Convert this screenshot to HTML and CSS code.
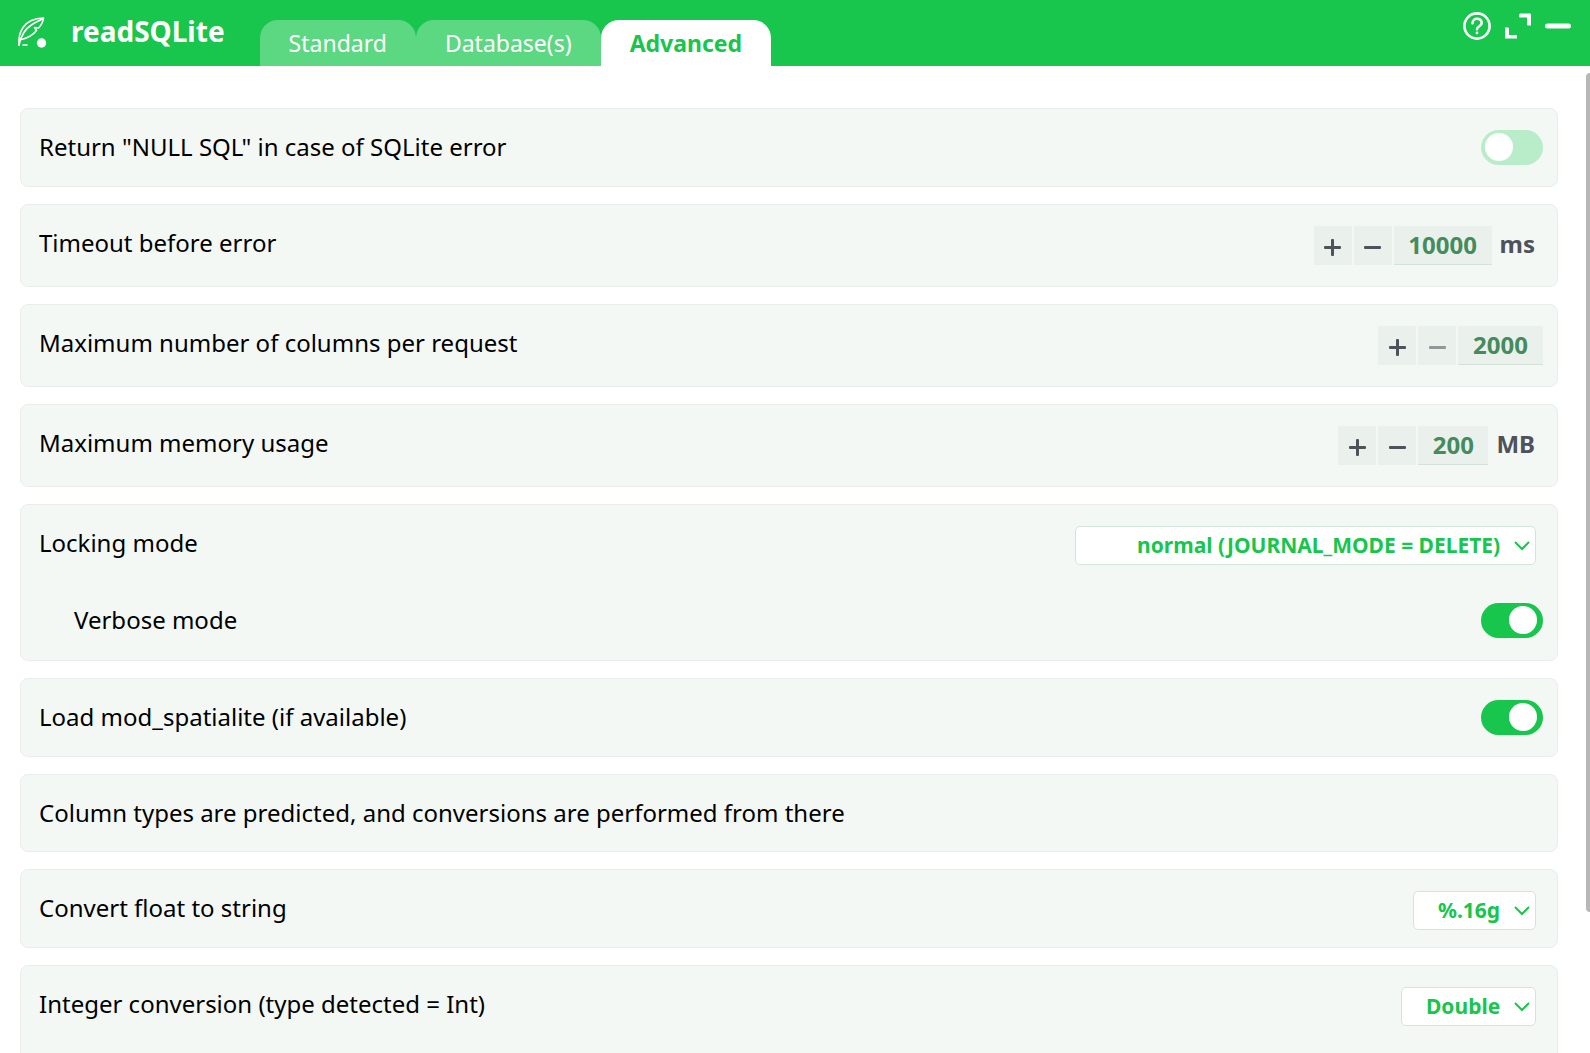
FILE: index.html
```html
<!DOCTYPE html>
<html lang="en">
<head>
    <meta charset="UTF-8">
    <meta name="viewport" content="width=device-width, initial-scale=1.0">
    <title>readSQLite</title>
    <link rel="stylesheet" href="styles.css">
</head>
<body>
    <header class="topbar">
        <svg class="logo" width="32" height="34" viewBox="0 0 32 34" fill="none" stroke="#fff" stroke-width="1.6" stroke-linecap="round" stroke-linejoin="round">
            <path d="M3 30 C2 18 7 3.500 27.500 3 C27 7 25.500 10 22.500 13 L18.500 12.500 L20.500 15.500 C17 20 12 23 5.500 24.500"/>
            <path d="M3 30 C4.500 22 9 14 16 9.500 C20 7 24 5.500 27 3.500"/>
            <path d="M7 30 H11"/>
            <circle cx="25.500" cy="28" r="4.700" fill="#fff" stroke="none"/>
        </svg>
        <h1 class="title">readSQLite</h1>
        <nav class="tabs">
            <button type="button" class="tab">Standard</button>
            <button type="button" class="tab">Database(s)</button>
            <button type="button" class="tab active">Advanced</button>
        </nav>
        <div class="window-actions">
            <button type="button" class="icon-button" aria-label="Help">
                <svg width="28" height="28" viewBox="0 0 28 28" fill="none" stroke="#fff" stroke-width="2.6" stroke-linecap="round">
                    <circle cx="14" cy="14" r="12.600"/>
                    <path d="M9.500 11.300 C9.500 5.200 18.700 5.400 18.700 11 C18.700 14.500 14 14 14 17.300"/>
                    <circle cx="14" cy="21" r="1.400" fill="#fff" stroke="none"/>
                </svg>
            </button>
            <button type="button" class="icon-button" aria-label="Expand">
                <svg width="26" height="26" viewBox="0 0 26 26" fill="#fff">
                    <path d="M15.500 .5 H25 a1 1 0 0 1 1 1 V12.500 H23 a1 1 0 0 1 -1 -1 V4.500 H15 a1 1 0 0 1 -1 -1 V2 a1.500 1.500 0 0 1 1.500 -1.500 Z"/>
                    <path d="M0 14.500 H3 a1 1 0 0 1 1 1 V22 H11 a1 1 0 0 1 1 1 V25.500 H0 Z"/>
                </svg>
            </button>
            <button type="button" class="icon-button" aria-label="Minimize">
                <svg width="26" height="26" viewBox="0 0 26 26" fill="none" stroke="#fff" stroke-width="5" stroke-linecap="round">
                    <path d="M2.500 13 H23.500"/>
                </svg>
            </button>
        </div>
    </header>

    <main class="content">
        <section class="card">
            <div class="row">
                <label for="nullSql">Return "NULL SQL" in case of SQLite error</label>
                <input type="checkbox" class="switch" id="nullSql">
            </div>
        </section>

        <section class="card">
            <div class="row tall">
                <label for="timeout">Timeout before error</label>
                <div class="stepper">
                    <button type="button" class="step plus" aria-label="Increase"></button>
                    <button type="button" class="step" aria-label="Decrease"></button>
                    <input type="text" class="number digits-5" id="timeout" value="10000">
                    <span class="unit">ms</span>
                </div>
            </div>
        </section>

        <section class="card">
            <div class="row tall">
                <label for="columns">Maximum number of columns per request</label>
                <div class="stepper">
                    <button type="button" class="step plus" aria-label="Increase"></button>
                    <button type="button" class="step" aria-label="Decrease" disabled></button>
                    <input type="text" class="number digits-4" id="columns" value="2000">
                </div>
            </div>
        </section>

        <section class="card">
            <div class="row tall">
                <label for="memory">Maximum memory usage</label>
                <div class="stepper">
                    <button type="button" class="step plus" aria-label="Increase"></button>
                    <button type="button" class="step" aria-label="Decrease"></button>
                    <input type="text" class="number digits-3" id="memory" value="200">
                    <span class="unit">MB</span>
                </div>
            </div>
        </section>

        <section class="card">
            <div class="row">
                <label for="locking">Locking mode</label>
                <div class="dropdown">
                    <select id="locking" class="wide">
                        <option>normal (JOURNAL_MODE = DELETE)</option>
                    </select>
                    <svg class="chevron" width="16" height="10" viewBox="0 0 16 10"><path d="M1 1 L8 8 L15 1"/></svg>
                </div>
            </div>
            <div class="row sub">
                <label for="verbose">Verbose mode</label>
                <input type="checkbox" class="switch" id="verbose" checked>
            </div>
        </section>

        <section class="card">
            <div class="row">
                <label for="spatialite">Load mod_spatialite (if available)</label>
                <input type="checkbox" class="switch" id="spatialite" checked>
            </div>
        </section>

        <section class="card">
            <div class="row info">
                <p>Column types are predicted, and conversions are performed from there</p>
            </div>
        </section>

        <section class="card">
            <div class="row">
                <label for="floatFormat">Convert float to string</label>
                <div class="dropdown">
                    <select id="floatFormat">
                        <option>%.16g</option>
                    </select>
                    <svg class="chevron" width="16" height="10" viewBox="0 0 16 10"><path d="M1 1 L8 8 L15 1"/></svg>
                </div>
            </div>
        </section>

        <section class="card">
            <div class="row">
                <label for="intType">Integer conversion (type detected = Int)</label>
                <div class="dropdown">
                    <select id="intType">
                        <option>Double</option>
                    </select>
                    <svg class="chevron" width="16" height="10" viewBox="0 0 16 10"><path d="M1 1 L8 8 L15 1"/></svg>
                </div>
            </div>
            <div class="row sub"></div>
        </section>
        <div class="scroll-thumb"></div>
    </main>
</body>
</html>
```

FILE: styles.css
```css
* {
    box-sizing: border-box;
}
body {
    margin: 0;
    height: 100vh;
    display: flex;
    flex-direction: column;
    overflow: hidden;
    font-family: "Noto Sans", sans-serif;
    font-size: 24px;
    color: #000;
    background: #fff;
}
button, input, select {
    font-family: inherit;
    margin: 0;
    border: none;
}

/* header */
.topbar {
    display: flex;
    align-items: flex-start;
    flex: none;
    height: 66px;
    padding-left: 16px;
    background: #18c54d;
    color: #fff;
}
.logo {
    margin-top: 15px;
}
.title {
    margin: 12px 35px 0 23px;
    font-size: 28px;
    line-height: 38px;
    font-weight: bold;
}
.tabs {
    display: flex;
    align-self: flex-end;
}
.tab {
    height: 46px;
    padding: 0 29px;
    font-size: 23px;
    line-height: 46px;
    color: #fff;
    background: #5dd882;
    border-radius: 18px 18px 0 0;
}
.tab.active {
    color: #18c54d;
    background: #fff;
    font-weight: bold;
}
.window-actions {
    display: flex;
    align-items: center;
    gap: 14px;
    margin: 12px 19px 0 auto;
}
.icon-button {
    display: flex;
    padding: 0;
    background: none;
}

/* settings */
.content {
    position: relative;
    flex: 1;
    display: flex;
    flex-direction: column;
    gap: 17px;
    min-height: 0;
    padding: 42px 32px 0 20px;
    overflow: hidden;
}
.card {
    flex: none;
    padding: 0 14px 0 18px;
    background: #f3f8f5;
    border: 1px solid #ebedec;
    border-radius: 8px;
}
.row {
    display: flex;
    justify-content: space-between;
    align-items: flex-start;
    height: 77px;
    padding-top: 21px;
}
.row.tall {
    height: 81px;
}
.row.info {
    height: 76px;
}
.row.sub {
    height: 78px;
    padding-left: 35px;
}
.row label,
.row p {
    margin: 0;
    line-height: 34px;
}

/* toggle */
.switch {
    appearance: none;
    width: 62px;
    height: 35px;
    padding: 3px 4px;
    border-radius: 18px;
    background: #b9edc9;
}
.switch::before {
    content: "";
    display: block;
    width: 28px;
    height: 28px;
    border-radius: 50%;
    background: #fff;
}
.switch:checked {
    padding-left: 28px;
    background: #18c54d;
}

/* number stepper */
.stepper {
    display: flex;
    gap: 2px;
}
.step {
    display: grid;
    place-items: center;
    width: 38px;
    height: 39px;
    padding: 4px 0 0;
    background: #eaf1ed;
    color: #4e525a;
}
.step::before,
.step.plus::after {
    content: "";
    grid-area: 1 / 1;
    width: 17px;
    height: 3px;
    border-radius: 1px;
    background: currentColor;
}
.step.plus::after {
    width: 3px;
    height: 17px;
}
.step:disabled {
    color: #92979a;
}
.number {
    height: 39px;
    padding: 0 0 2px;
    font-size: 24px;
    font-weight: bold;
    text-align: center;
    color: #458b5b;
    background: #eaf1ed;
    border-bottom: 1px solid #d5e2da;
}
.digits-3 {
    width: 70px;
}
.digits-4 {
    width: 85px;
}
.digits-5 {
    width: 98px;
}
.unit {
    padding: 0 8px 0 6px;
    font-size: 24px;
    line-height: 36px;
    font-weight: bold;
    color: #4e525a;
}

/* drop-down */
.dropdown {
    position: relative;
    margin-right: 7px;
}
.dropdown select {
    display: block;
    appearance: none;
    height: 39px;
    padding: 0 34px 2px 24px;
    font-size: 21px;
    font-weight: bold;
    color: #18c54d;
    background: #fff;
    border: 1px solid #d5e4db;
    border-radius: 5px;
}
.dropdown .wide {
    padding-left: 61px;
}
.chevron {
    position: absolute;
    right: 6px;
    top: 15px;
    fill: none;
    stroke: #18c54d;
    stroke-width: 2;
    pointer-events: none;
}

.scroll-thumb {
    position: absolute;
    top: 7px;
    right: 0;
    width: 4px;
    height: 85%;
    background: #b7b7b7;
    border-radius: 4px 0 0 4px;
}
```
